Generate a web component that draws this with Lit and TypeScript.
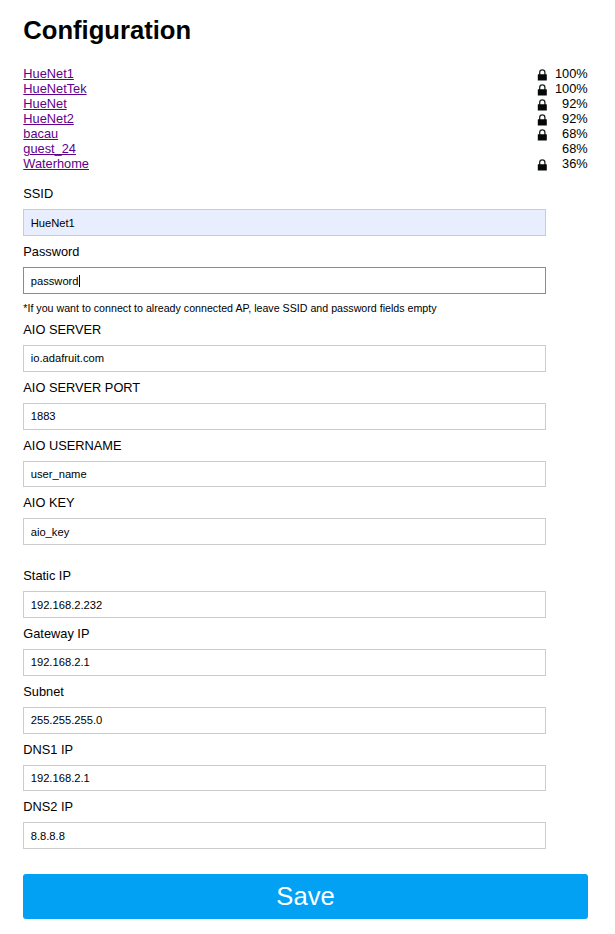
import { LitElement, html, css, nothing } from "lit";
import { customElement, property } from "lit/decorators.js";
import { classMap } from "lit/directives/class-map.js";

@customElement("network-row")
class NetworkRow extends LitElement {
  @property() name = "";
  @property({ type: Number }) signal = 0;
  @property({ type: Boolean }) secured = false;

  static styles = css`
    :host { display: flex; height: 15px; line-height: 15px; align-items: flex-start; }
    .name { color: #60008c; text-decoration: underline; margin-right: auto; }
    .lock { width: 10px; height: 12px; margin-top: 3px; flex: none; }
    .signal { width: 40.4px; text-align: right; }
  `;

  render() {
    return html`
      <a class="name" href="#p">${this.name}</a>
      ${this.secured
        ? html`<svg class="lock" viewBox="0 0 10 12">
            <path d="M2.7 6V3.4a2.6 2.6 0 0 1 5.2 0V6" fill="none" stroke="#222" stroke-width="1.3" />
            <rect x="0.8" y="5.2" width="9" height="6.4" rx="0.4" fill="#050808" />
          </svg>`
        : nothing}
      <span class="signal">${this.signal}%</span>
    `;
  }
}

@customElement("config-field")
class ConfigField extends LitElement {
  @property() label = "";
  @property() value = "";
  @property() mode = "";

  static styles = css`
    :host { display: block; height: 57.8px; }
    .label { height: 15px; line-height: 15px; margin-bottom: 8px; }
    .box {
      box-sizing: border-box;
      display: flex;
      align-items: center;
      width: 522.8px;
      height: 26.8px;
      padding: 0.2px 6.4px 0;
      border: 1px solid #ccc;
      font-size: 11.2px;
      background: #fff;
    }
    .filled { background: #e8eefe; }
    .focused { border-color: #48a5b2; }
    .caret { width: 1px; height: 12px; margin-left: 0.4px; background: #000; }
  `;

  render() {
    const focused = this.mode === "focused";
    return html`
      <div class="label">${this.label}</div>
      <div class=${classMap({ box: true, filled: this.mode === "filled", focused })}>
        <span>${this.value}</span>${focused ? html`<span class="caret"></span>` : nothing}
      </div>
    `;
  }
}

const networks: [string, number, boolean][] = [
  ["HueNet1", 100, true],
  ["HueNetTek", 100, true],
  ["HueNet", 92, true],
  ["HueNet2", 92, true],
  ["bacau", 68, true],
  ["guest_24", 68, false],
  ["Waterhome", 36, true],
];

const wifi = [
  ["SSID", "HueNet1", "filled"],
  ["Password", "password", "focused"],
];
const aio = [
  ["AIO SERVER", "io.adafruit.com"],
  ["AIO SERVER PORT", "1883"],
  ["AIO USERNAME", "user_name"],
  ["AIO KEY", "aio_key"],
];
const addresses = [
  ["Static IP", "192.168.2.232"],
  ["Gateway IP", "192.168.2.1"],
  ["Subnet", "255.255.255.0"],
  ["DNS1 IP", "192.168.2.1"],
  ["DNS2 IP", "8.8.8.8"],
];

const fields = (rows: string[][]) =>
  rows.map(
    ([label, value, mode = ""]) =>
      html`<config-field .label=${label} .value=${value} .mode=${mode}></config-field>`
  );

@customElement("app-root")
class AppRoot extends LitElement {
  static styles = css`
    :host {
      display: block;
      box-sizing: border-box;
      height: 934px;
      padding: 15px 27.3px 0 23.3px;
      background: #fff;
      color: #000;
      font: 12.8px "Liberation Sans", Arial, sans-serif;
    }
    h1 { margin: 0 0 21px; height: 30px; line-height: 30px; font-size: 25.6px; }
    .wifi { margin-top: 15.4px; }
    .note {
      height: 21px;
      margin-top: -1px;
      line-height: 14px;
      font-size: 10.67px;
      white-space: nowrap;
    }
    .addresses { margin-top: 15px; }
    .save {
      display: block;
      width: 100%;
      height: 45px;
      margin-top: 16.6px;
      padding: 0;
      border: 0;
      border-radius: 3px;
      background: #02a1f3;
      color: #fff;
      font: 25.6px "Liberation Sans", Arial, sans-serif;
    }
  `;

  render() {
    return html`
      <h1>Configuration</h1>
      <div>
        ${networks.map(
          ([name, signal, secured]) =>
            html`<network-row .name=${name} .signal=${signal} .secured=${secured}></network-row>`
        )}
      </div>
      <div class="wifi">${fields(wifi)}</div>
      <div class="note">*If you want to connect to already connected AP, leave SSID and password fields empty</div>
      <div>${fields(aio)}</div>
      <div class="addresses">${fields(addresses)}</div>
      <button class="save">Save</button>
    `;
  }
}
